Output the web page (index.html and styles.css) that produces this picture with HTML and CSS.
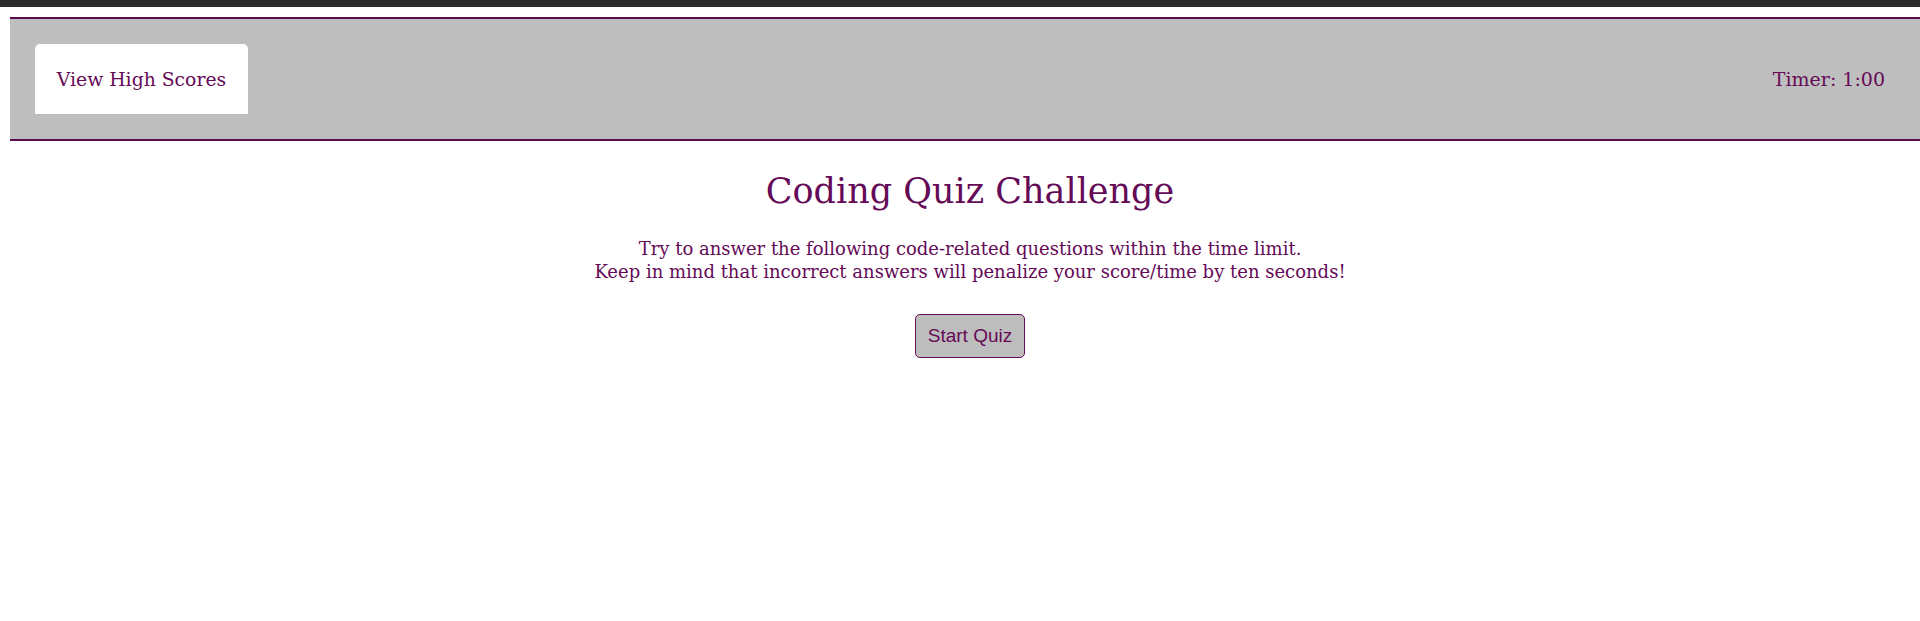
FILE: index.html
```html
<!DOCTYPE html>
<html lang="en">
<head>
<meta charset="utf-8">
<title>Coding Quiz Challenge</title>
<link rel="stylesheet" href="styles.css">
</head>
<body>
<div class="topstrip"></div>
<div class="page">
  <header class="header">
    <button class="scores-btn">View High Scores</button>
    <div class="timer">Timer: 1:00</div>
  </header>
  <main class="intro">
    <h1 class="title">Coding Quiz Challenge</h1>
    <p class="lead">Try to answer the following code-related questions within the time limit.<br>Keep in mind that incorrect answers will penalize your score/time by ten seconds!</p>
    <button class="start-btn">Start Quiz</button>
  </main>
</div>
</body>
</html>
```

FILE: styles.css
```css
html, body {
  margin: 0;
  padding: 0;
  overflow: hidden;
  background: #ffffff;
}
body {
  font-family: "DejaVu Serif", serif;
  color: #650a57;
}
.topstrip {
  height: 7px;
  background: #2b2b2b;
}
.page {
  margin-left: 10px;
  width: 1920px;
}
.header {
  margin-top: 10px;
  height: 120px;
  border-top: 2px solid #5c0a50;
  border-bottom: 2px solid #5c0a50;
  background: #bebebe;
  display: flex;
  align-items: center;
  justify-content: space-between;
  padding: 0 45px 0 25px;
}
.scores-btn {
  font-family: "DejaVu Serif", serif;
  font-size: 18.8px;
  color: #650a57;
  background: #ffffff;
  border: none;
  border-radius: 5px 5px 0 0;
  width: 213px;
  height: 70px;
  padding: 0;
}
.timer {
  font-size: 19px;
}
.intro {
  display: flex;
  flex-direction: column;
  align-items: center;
  text-align: center;
}
.title {
  font-weight: normal;
  font-size: 35px;
  margin: 26px 0 0;
  line-height: 48px;
}
.lead {
  font-size: 18px;
  line-height: 23px;
  margin: 22px 0 0;
}
.start-btn {
  margin-top: 31px;
  width: 110px;
  height: 44px;
  font-family: "Liberation Sans", Arial, sans-serif;
  font-size: 19px;
  color: #650a57;
  background: #bdbdbd;
  border: 1px solid #650a57;
  border-radius: 5px;
  padding: 0;
}
```
